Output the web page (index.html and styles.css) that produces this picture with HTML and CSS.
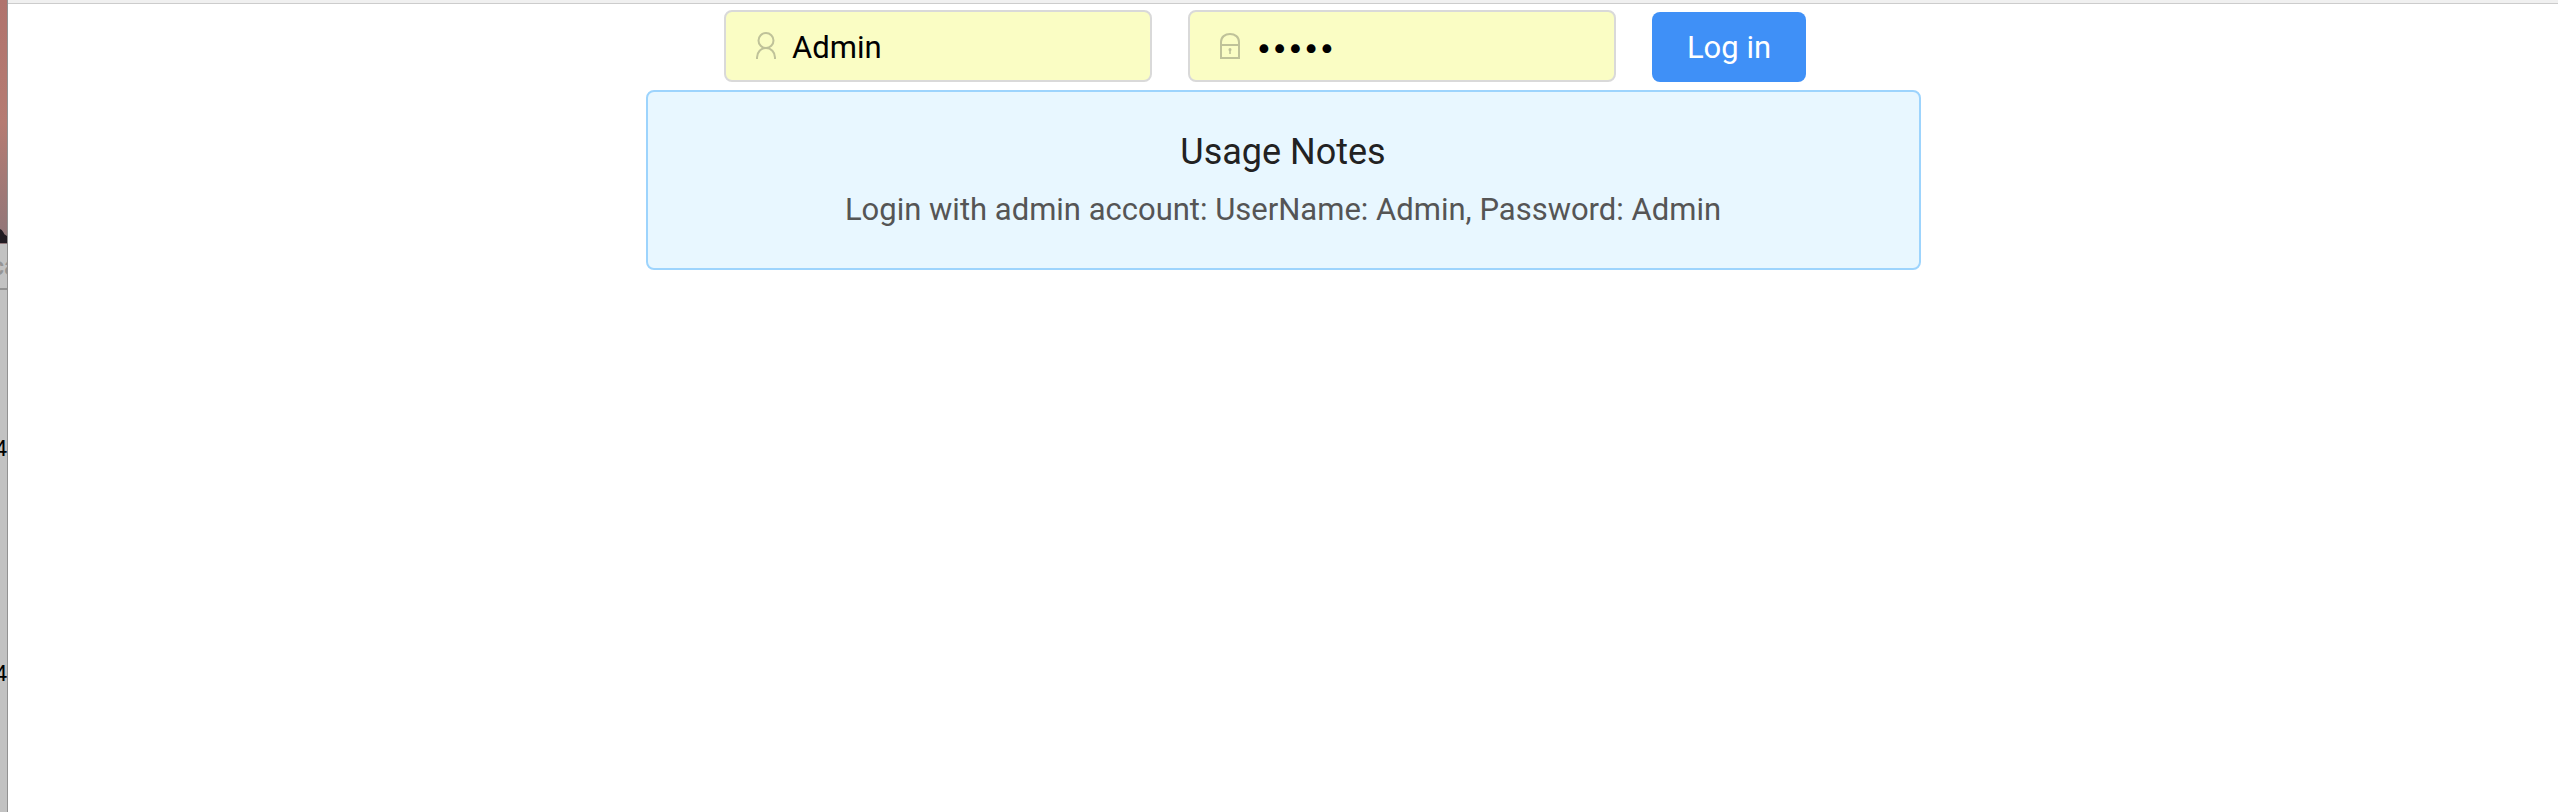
FILE: index.html
```html
<!DOCTYPE html>
<html lang="en">
<head>
<meta charset="utf-8">
<title>Log in</title>
<link rel="stylesheet" href="styles.css">
</head>
<body>
<aside class="backdrop" aria-hidden="true">
  <div class="backdrop-photo">
    <svg class="photo-shape" viewBox="0 0 8 16"><path d="M0 0 2 1 4 4 5 6 8 8V16H0Z"/></svg>
  </div>
  <div class="backdrop-tab"><span class="tab-text">ca</span></div>
  <div class="backdrop-page">
    <span class="page-text">4</span>
    <span class="page-text">4</span>
  </div>
</aside>
<div class="window">
  <div class="toolbar-edge"></div>
  <main class="content">
    <form class="login">
      <label class="field">
        <svg class="icon" viewBox="0 0 20 28" role="img" aria-label="User name"><circle cx="10" cy="8.5" r="7.5"/><path d="M1 27V25.500C1 20 5 16 10 16S19 20 19 25.500V27"/></svg>
        <input class="input" type="text" value="Admin" autocomplete="off">
      </label>
      <label class="field">
        <svg class="icon" viewBox="0 0 20 28" role="img" aria-label="Password"><path d="M1 13V10C1 5 5 2 10 2S19 5 19 10V13M1 13H19V26H1Z"/><path class="keyhole" d="M8.500 17.500a1.500 1.500 0 0 1 3 0q0 1-.7 1.500V22H9.200V19q-.7-.5-.7-1.500Z"/></svg>
        <input class="input secret" type="password" value="Admin" autocomplete="off">
      </label>
      <button class="submit" type="button">Log in</button>
    </form>
    <section class="notes">
      <h1 class="notes-title">Usage Notes</h1>
      <p class="notes-text">Login with admin account: UserName: Admin, Password: Admin</p>
    </section>
  </main>
</div>
</body>
</html>
```
FILE: styles.css
```css
* { box-sizing: border-box; }
body {
  margin: 0;
  min-height: 100vh;
  display: flex;
  background: #fff;
  font-family: Roboto, "Liberation Sans", sans-serif;
  font-size: 31px;
}
.backdrop {
  width: 8px;
  flex: none;
  display: flex;
  flex-direction: column;
  overflow: hidden;
  background: #c2c2c2;
  border-right: 1px solid #929292;
}
.backdrop-photo {
  height: 244px;
  display: flex;
  align-items: flex-end;
  background: linear-gradient(#b0736d, #b57b72 50%, #8f7679);
}
.photo-shape { width: 8px; height: 16px; fill: #211b22; }
.backdrop-tab {
  height: 46px;
  display: flex;
  justify-content: flex-end;
  align-items: center;
  border-bottom: 2px solid #929292;
  color: #949494;
}
.tab-text { font-size: 26px; font-weight: 500; margin-right: -11px; }
.backdrop-page {
  display: flex;
  flex-direction: column;
  align-items: flex-end;
  gap: 193px;
  padding-top: 143px;
}
.page-text { font-size: 22px; line-height: 32px; color: #000; }
.window { flex: 1; min-width: 0; }
.toolbar-edge {
  height: 4px;
  background: #f0f0f0;
  border-bottom: 1px solid #ccc;
}
.content {
  display: flex;
  flex-direction: column;
  align-items: center;
  gap: 8px;
  padding-top: 6px;
}
.login {
  display: flex;
  align-items: flex-end;
  gap: 36px;
  padding-right: 36px;
}
.field {
  width: 428px;
  height: 72px;
  display: flex;
  align-items: center;
  gap: 16px;
  padding: 0 30px;
  border: 2px solid #d9d9d9;
  border-radius: 8px;
  background: #fafdc4;
}
.icon {
  width: 20px;
  height: 28px;
  flex: none;
  fill: none;
  stroke: #bfc299;
  stroke-width: 2;
}
.keyhole { fill: #bfc299; stroke: none; }
.input {
  flex: 1;
  min-width: 0;
  height: 68px;
  padding: 2px 0 0;
  border: 0;
  outline: 0;
  background: transparent;
  color: #000;
  font: inherit;
}
.secret { font-family: Inter, sans-serif; font-size: 28px; }
.submit {
  min-width: 154px;
  height: 70px;
  padding: 0 32px;
  border: 0;
  border-radius: 8px;
  background: #3f90f7;
  color: #fff;
  font: inherit;
}
.notes {
  width: 50%;
  padding: 34px 32px;
  border: 2px solid #9dd4fd;
  border-radius: 8px;
  background: #e8f7ff;
  text-align: center;
}
.notes-title {
  margin: 0 0 8px;
  font-size: 36px;
  line-height: 52px;
  font-weight: 400;
  color: #222;
}
.notes-text {
  margin: 0;
  line-height: 48px;
  color: #555;
}
```
